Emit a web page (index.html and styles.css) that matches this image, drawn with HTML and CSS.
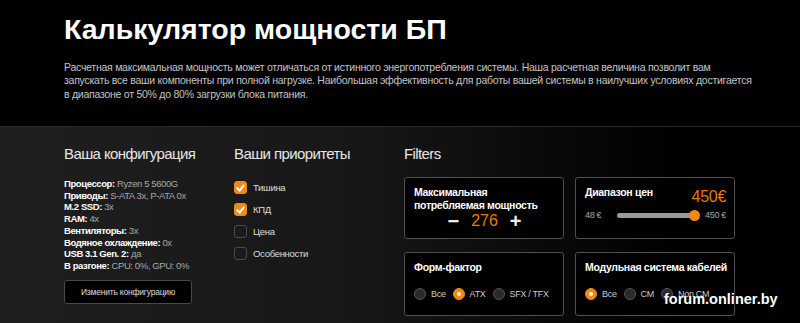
FILE: index.html
```html
<!DOCTYPE html>
<html>

<head>
    <meta name="viewport" content="width=device-width, initial-scale=1">
    <title>Калькулятор мощности БП</title>
    <link rel="stylesheet" href="styles.css">
</head>

<body>
    <header class="hero">
        <h1>Калькулятор мощности БП</h1>
        <p>Расчетная максимальная мощность может отличаться от истинного энергопотребления системы. Наша расчетная величина позволит вам<br>
            запускать все ваши компоненты при полной нагрузке. Наибольшая эффективность для работы вашей системы в наилучших условиях достигается<br>
            в диапазоне от 50% до 80% загрузки блока питания.</p>
    </header>

    <main class="calc">
        <section class="col col-config">
            <h2>Ваша конфигурация</h2>
            <ul class="config-list">
                <li><b>Процессор:</b> Ryzen 5 5600G</li>
                <li><b>Приводы:</b> S-ATA 3x, P-ATA 0x</li>
                <li><b>M.2 SSD:</b> 3x</li>
                <li><b>RAM:</b> 4x</li>
                <li><b>Вентиляторы:</b> 3x</li>
                <li><b>Водяное охлаждение:</b> 0x</li>
                <li><b>USB 3.1 Gen. 2:</b> да</li>
                <li><b>В разгоне:</b> CPU: 0%, GPU: 0%</li>
            </ul>
            <button type="button" class="btn-change">Изменить конфигурацию</button>
        </section>

        <section class="col col-prio">
            <h2>Ваши приоритеты</h2>
            <label class="check"><span class="box on"></span>Тишина</label>
            <label class="check"><span class="box on"></span>КПД</label>
            <label class="check"><span class="box"></span>Цена</label>
            <label class="check"><span class="box"></span>Особенности</label>
        </section>

        <section class="col col-filters">
            <h2>Filters</h2>
            <div class="cards">
                <div class="card">
                    <div class="card-title">Максимальная<br>потребляемая мощность</div>
                    <div class="stepper">
                        <span class="step">&minus;</span>
                        <span class="watts">276</span>
                        <span class="step">+</span>
                    </div>
                </div>

                <div class="card">
                    <div class="card-head">
                        <div class="card-title">Диапазон цен</div>
                        <div class="price">450€</div>
                    </div>
                    <div class="range">
                        <span class="range-min">48 €</span>
                        <div class="track"><span class="thumb"></span></div>
                        <span class="range-max">450 €</span>
                    </div>
                </div>

                <div class="card">
                    <div class="card-title">Форм-фактор</div>
                    <div class="radios">
                        <label class="radio"><span class="dot"></span>Все</label>
                        <label class="radio"><span class="dot on"></span>ATX</label>
                        <label class="radio"><span class="dot"></span>SFX / TFX</label>
                    </div>
                </div>

                <div class="card">
                    <div class="card-title">Модульная система кабелей</div>
                    <div class="radios">
                        <label class="radio"><span class="dot on"></span>Все</label>
                        <label class="radio"><span class="dot"></span>CM</label>
                        <label class="radio"><span class="dot"></span>Non CM</label>
                    </div>
                </div>
            </div>
        </section>
    </main>

    <div class="watermark">forum.onliner.by</div>
</body>

</html>
```

FILE: styles.css
```css
body {
    font-family: "Liberation Sans", Arial, sans-serif;
    margin: 0;
    padding: 0;
    background-color: #000;
    color: #fff;
    height: 323px;
    overflow: hidden;
}

.hero {
    background-color: #000;
    height: 126px;
    padding: 0 64px;
    box-sizing: border-box;
}

.hero h1 {
    margin: 0;
    padding-top: 13px;
    font-size: 28.5px;
    line-height: 32px;
    font-weight: bold;
}

.hero p {
    margin: 16px 0 0;
    font-size: 10.5px;
    line-height: 13.3px;
    letter-spacing: -0.25px;
    color: #c4c4c4;
    white-space: nowrap;
}

.calc {
    display: flex;
    height: 197px;
    padding: 17px 0 0 64px;
    box-sizing: border-box;
    border-top: 1px solid #2a2a2a;
    background: linear-gradient(to right, #1f1f1f 0%, #171717 45%, #000 85%);
}

.col h2 {
    margin: 0;
    font-size: 15px;
    line-height: 20px;
    font-weight: normal;
    color: #e6e6e6;
    letter-spacing: -0.6px;
}

.col-config {
    width: 170px;
}

.col-prio {
    width: 170px;
}

.config-list {
    list-style: none;
    margin: 14px 0 0;
    padding: 0;
    font-size: 9.5px;
    line-height: 11.7px;
    letter-spacing: -0.4px;
    color: #a8a8a8;
}

.config-list b {
    color: #fff;
}

.btn-change {
    margin-top: 8px;
    width: 128px;
    height: 24px;
    background-color: #000;
    color: #ddd;
    border: 1px solid #4a4a4a;
    border-radius: 3px;
    font-family: inherit;
    font-size: 8.5px;
    letter-spacing: -0.2px;
    cursor: pointer;
}

.col-prio h2 {
    margin-bottom: 17px;
}

.check {
    display: flex;
    align-items: center;
    gap: 6px;
    height: 13px;
    margin-top: 9px;
    font-size: 9.5px;
    letter-spacing: -0.3px;
    color: #ddd;
}

.box {
    width: 11px;
    height: 11px;
    border: 1px solid #4c4c4c;
    border-radius: 3px;
    background-color: #1a1a1a;
    position: relative;
}

.box.on {
    background-color: #f28a10;
    border-color: #f28a10;
}

.box.on::after {
    content: "";
    position: absolute;
    left: 3px;
    top: 1px;
    width: 3px;
    height: 6px;
    border: solid #fff;
    border-width: 0 2px 2px 0;
    transform: rotate(40deg);
}

.col-filters {
    width: 330px;
}

.cards {
    display: grid;
    grid-template-columns: 160px 160px;
    grid-template-rows: 62px 64px;
    column-gap: 11px;
    row-gap: 13px;
    margin-top: 13px;
}

.card {
    background-color: #000;
    border: 1px solid #505050;
    border-radius: 3px;
    padding: 8px 8px 0 9px;
    box-sizing: border-box;
}

.card-title {
    font-size: 10.5px;
    line-height: 12.5px;
    font-weight: bold;
    letter-spacing: -0.3px;
    color: #fff;
    white-space: nowrap;
}

.stepper {
    display: flex;
    align-items: center;
    justify-content: center;
    gap: 12px;
    margin-top: 2px;
}

.step {
    font-size: 20px;
    line-height: 14px;
    font-weight: bold;
    color: #eee;
}

.watts {
    font-size: 16px;
    line-height: 16px;
    color: #e57b00;
}

.card-head {
    display: flex;
    justify-content: space-between;
    align-items: flex-start;
}

.price {
    font-size: 16px;
    line-height: 18px;
    margin-top: 2px;
    color: #e57b00;
    letter-spacing: -0.3px;
}

.range {
    display: flex;
    align-items: center;
    margin-top: 4px;
    font-size: 9px;
    letter-spacing: -0.3px;
    color: #a8a8a8;
    white-space: nowrap;
}

.range-min {
    width: 32px;
    flex-shrink: 0;
}

.track {
    position: relative;
    flex: 1;
    height: 5px;
    border-radius: 3px;
    background-color: #9a9a9a;
    margin-right: 10px;
}

.thumb {
    position: absolute;
    right: -5px;
    top: -3px;
    width: 11px;
    height: 11px;
    border-radius: 50%;
    background-color: #f28a10;
}

.radios {
    display: flex;
    align-items: center;
    gap: 7px;
    margin-top: 14px;
    font-size: 9px;
    letter-spacing: -0.3px;
    color: #ccc;
    white-space: nowrap;
}

.radio {
    display: flex;
    align-items: center;
    gap: 5px;
}

.dot {
    width: 10px;
    height: 10px;
    border-radius: 50%;
    border: 1px solid #555;
    background-color: #2a2a2a;
    position: relative;
    flex-shrink: 0;
}

.dot.on {
    background-color: #f28a10;
    border-color: #f28a10;
}

.dot.on::after {
    content: "";
    position: absolute;
    left: 3px;
    top: 3px;
    width: 4px;
    height: 4px;
    border-radius: 50%;
    background-color: #fff;
}

.watermark {
    position: absolute;
    left: 664px;
    top: 291px;
    font-size: 14.5px;
    font-weight: bold;
    color: #fff;
    text-shadow: 1px 1px 1px #000;
}
```
